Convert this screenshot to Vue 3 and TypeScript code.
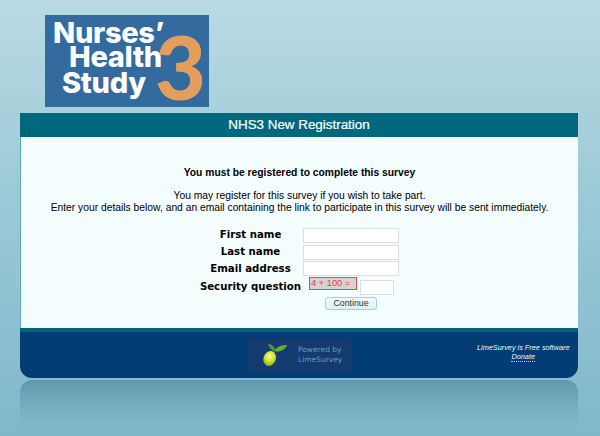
<script setup lang="ts">
const fields: string[] = ['First name', 'Last name', 'Email address']
</script>

<template>
  <div class="page">
    <header class="brand">
      <div class="logo">
        <div class="logo-words">
          <span class="w1">Nurses’</span>
          <span class="w2">Health</span>
          <span class="w3">Study</span>
        </div>
        <span class="three">3</span>
      </div>
    </header>

    <main class="panel">
      <h1 class="title">NHS3 New Registration</h1>
      <section class="body">
        <p class="must">You must be registered to complete this survey</p>
        <p class="intro">
          You may register for this survey if you wish to take part.<br />
          Enter your details below, and an email containing the link to participate in this survey will be sent immediately.
        </p>
        <form class="form" @submit.prevent>
          <div v-for="f in fields" :key="f" class="row">
            <label class="label">{{ f }}</label>
            <input class="input" type="text" />
          </div>
          <div class="row security">
            <label class="label">Security question</label>
            <div class="captcha">
              <span class="sum">4 + 100 =</span>
              <input class="input small" type="text" />
            </div>
          </div>
          <div class="actions">
            <button class="btn" type="submit">Continue</button>
          </div>
        </form>
      </section>
      <footer class="foot">
        <div class="powered">
          <svg class="lime" viewBox="0 0 26 26" width="26" height="26">
            <defs>
              <radialGradient id="limeG" cx="0.45" cy="0.35" r="0.7">
                <stop offset="0" stop-color="#f8fb9e" />
                <stop offset="0.5" stop-color="#d2e430" />
                <stop offset="1" stop-color="#7fa814" />
              </radialGradient>
            </defs>
            <path d="M12 9 C9 8 7 5 6 2 C10 2 13 5 13 9 Z" fill="#4f9a2a" />
            <path d="M12 9 C15 4 20 3 25 3 C24 7 18 11 12 9 Z" fill="#5fae34" />
            <ellipse cx="7.7" cy="16.5" rx="6.2" ry="7.6" transform="rotate(20 7.7 16.5)" fill="url(#limeG)" />
          </svg>
          <span class="pw-text">Powered by<br />LimeSurvey</span>
        </div>
        <div class="free">
          <span>LimeSurvey is Free software</span>
          <a class="donate">Donate</a>
        </div>
      </footer>
    </main>
    <div class="reflection"></div>
  </div>
</template>

<style>
html, body { margin: 0; padding: 0; }
</style>

<style scoped>
.page {
  width: 600px;
  height: 436px;
  box-sizing: border-box;
  overflow: hidden;
  padding: 15px 22px 0 20px;
  background: linear-gradient(180deg, #b9dbe4 0%, #9fcbd8 40%, #7fb8ca 100%);
  font-family: "Liberation Sans", Arial, sans-serif;
}
.brand { padding-left: 25px; }
.logo {
  width: 164px;
  height: 92px;
  background: #336b9f;
  display: flex;
  position: relative;
  box-sizing: border-box;
  padding: 5px 0 0 8px;
  color: #fff;
}
.logo-words {
  display: flex;
  flex-direction: column;
  font-family: "Inter", "Liberation Sans", sans-serif;
  font-weight: 800;
  font-size: 29px;
  line-height: 25px;
  letter-spacing: -0.3px;
  white-space: nowrap;
}
.w2 { margin-left: 16px; margin-top: -1px; }
.w3 { margin-left: 9px; margin-top: 1px; }
.three {
  position: absolute;
  left: 110px;
  top: 7px;
  font-family: "Lato", "Liberation Sans", sans-serif;
  font-weight: 900;
  font-size: 88px;
  line-height: 88px;
  color: #e39e5b;
}
.panel {
  margin-top: 6px;
  border-radius: 0 0 12px 12px;
  overflow: hidden;
}
.title {
  margin: 0;
  height: 24px;
  line-height: 24px;
  background: #00687c;
  color: #fff;
  font-size: 13.4px;
  font-weight: 400;
  text-align: center;
  -webkit-text-stroke: 0.2px #fff;
}
.body {
  background: #f4fdff;
  height: 191px;
  box-sizing: border-box;
  padding-top: 30px;
  border-left: 1px solid #5fa9ba;
  text-align: center;
  font-size: 10.3px;
  line-height: 12px;
  color: #000;
}
.must { margin: 0; font-weight: 700; }
.intro { margin: 11px 0 0; }
.form {
  margin-top: 13px;
  padding-left: 177px;
  display: flex;
  flex-direction: column;
}
.row {
  display: grid;
  grid-template-columns: 105px 1fr;
  align-items: center;
  height: 16.7px;
}
.label {
  font-family: "DejaVu Sans", Verdana, sans-serif;
  font-weight: 700;
  font-size: 10.2px;
  white-space: nowrap;
  text-align: center;
}
.input {
  box-sizing: border-box;
  width: 96px;
  height: 15px;
  padding: 0;
  background: #fff;
  border: 1px solid #dcdfe0;
}
.row.security { height: 19.5px; align-items: start; }
.security .label { margin-top: 4px; }
.captcha { display: flex; align-items: flex-start; gap: 3px; margin-left: 6px; }
.sum {
  box-sizing: border-box;
  width: 48px;
  height: 13px;
  line-height: 11px;
  background: #d4d4d4;
  border: 1px solid #e64a4a;
  color: #e8403f;
  font-size: 9.3px;
  white-space: nowrap;
  text-align: left;
  padding-left: 1px;
}
.input.small { width: 34px; margin-top: 3px; }
.actions { display: flex; padding-left: 127px; }
.btn {
  width: 52px;
  height: 13px;
  padding: 0;
  border: 1px solid #a9cfd8;
  border-radius: 3px;
  background: linear-gradient(#f3fcff, #d8f1f8);
  font: 8.8px/11px "Liberation Sans", Arial, sans-serif;
  color: #333;
}
.foot {
  height: 50px;
  box-sizing: border-box;
  background: #033d76;
  border-top: 4px solid #00647c;
  display: flex;
  color: #fff;
}
.powered {
  margin: 6px 0 0 228px;
  width: 103px;
  height: 34px;
  background: #143a70;
  display: flex;
  align-items: center;
  box-sizing: border-box;
  padding-left: 14px;
  gap: 10px;
}
.pw-text {
  font-family: "DejaVu Sans", Verdana, sans-serif;
  font-size: 7.5px;
  line-height: 10px;
  color: #6b9abb;
}
.free {
  margin: 11px 0 0 126px;
  display: flex;
  flex-direction: column;
  align-items: center;
  font-size: 7.3px;
  line-height: 9px;
  font-style: italic;
  color: #f2f5f8;
  white-space: nowrap;
}
.donate { border-bottom: 1px dotted #bcd; text-decoration: none; }
.reflection {
  margin-top: 2px;
  height: 46px;
  border-radius: 12px 12px 0 0;
  background: linear-gradient(180deg, #5f97ae 0%, #72aabd 45%, rgba(127, 184, 202, 0) 100%);
}
</style>
